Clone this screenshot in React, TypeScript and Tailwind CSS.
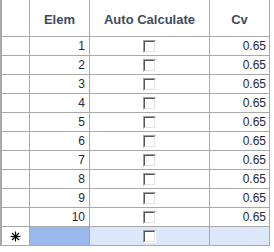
const rows = [1, 2, 3, 4, 5, 6, 7, 8, 9, 10];

function Checkbox() {
  return (
    <div className="h-[13px] w-[13px] border-l border-t border-b border-r border-l-[#a0a0a0] border-t-[#a0a0a0] border-b-white border-r-white">
      <div className="h-full w-full border-l border-t border-b border-r border-l-[#555] border-t-[#555] border-b-[#e4e4e4] border-r-[#e4e4e4] bg-white" />
    </div>
  );
}

function Star() {
  return (
    <svg width="11" height="11" viewBox="0 0 11 11" stroke="#000" strokeWidth="1.2">
      <line x1="5.5" y1="0.5" x2="5.5" y2="10.5" />
      <line x1="0.5" y1="5.5" x2="10.5" y2="5.5" />
      <line x1="2" y1="2" x2="9" y2="9" />
      <line x1="9" y1="2" x2="2" y2="9" />
    </svg>
  );
}

export default function App() {
  return (
    <div className="h-[252px] w-[274px] bg-white font-['Liberation_Sans',Arial,sans-serif]">
      <div className="w-[270px] border-l-2 border-[#a9a9a9]">
        {/* header */}
        <div className="flex h-[37px] border-b border-[#a9a9a9] text-[13px] font-bold text-[#3e4a60]">
          <div className="w-[28px] border-r border-[#a9a9a9]" />
          <div className="flex w-[60px] items-center justify-center border-r border-[#a9a9a9] pt-1">Elem</div>
          <div className="flex w-[120px] items-center justify-center border-r border-[#a9a9a9] pt-1">Auto Calculate</div>
          <div className="flex w-[60px] items-center justify-center border-r border-[#a9a9a9] pt-1">Cv</div>
        </div>

        {rows.map((n) => (
          <div key={n} className="flex h-[19px] border-b border-[#a9a9a9] text-[12px] text-[#1e2838]">
            <div className="w-[28px] border-r border-[#a9a9a9]" />
            <div className="flex w-[60px] items-center justify-end border-r border-[#a9a9a9] pr-[4px]">{n}</div>
            <div className="flex w-[120px] items-start justify-center border-r border-[#a9a9a9] pt-[3px]">
              <Checkbox />
            </div>
            <div className="flex w-[60px] items-center justify-end border-r border-[#a9a9a9] pr-[3px]">0.65</div>
          </div>
        ))}

        {/* new row */}
        <div className="flex h-[19px] border-b border-[#a9a9a9]">
          <div className="flex w-[28px] items-center justify-center border-r border-[#a9a9a9]">
            <Star />
          </div>
          <div className="w-[60px] border-r border-[#a9a9a9] bg-[#99b9ec]" />
          <div className="flex w-[120px] items-start justify-center border-r border-[#a9a9a9] bg-[#dce8f9] pt-[3px]">
            <Checkbox />
          </div>
          <div className="w-[60px] border-r border-[#a9a9a9] bg-[#dce8f9]" />
        </div>
      </div>
    </div>
  );
}
